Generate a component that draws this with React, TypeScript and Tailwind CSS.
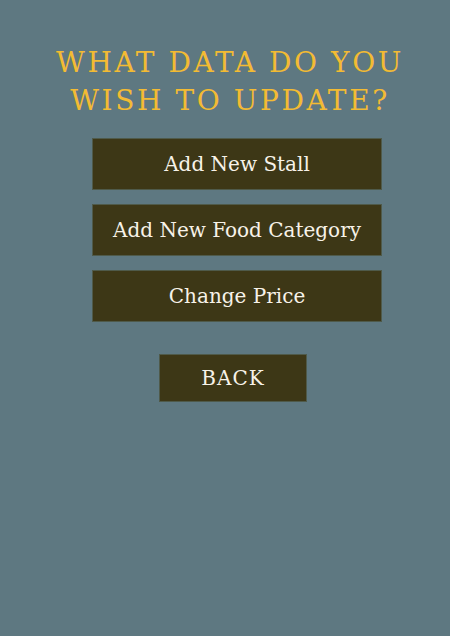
import React from "react";

export default function App() {
  const items = ["Add New Stall", "Add New Food Category", "Change Price"];
  return (
    <div
      className="w-[450px] h-[636px] bg-[#5e7881] flex flex-col items-start"
      style={{ fontFamily: '"DejaVu Serif", "Liberation Serif", serif' }}
    >
      <h1 className="mt-[44px] w-[460px] text-center text-[#f3bb33] text-[28px] leading-[38px] tracking-[2.6px] uppercase">
        What data do you
        <br />
        wish to update?
      </h1>
      <div className="ml-[92px] mt-[18px] flex flex-col gap-[14px]">
        {items.map((t) => (
          <button
            key={t}
            className="w-[290px] h-[52px] bg-[#3d3716] border border-[#4f5a4a] text-[#f7f2e8] text-[20px] flex items-center justify-center"
          >
            {t}
          </button>
        ))}
      </div>
      <button className="ml-[159px] mt-[32px] w-[148px] h-[48px] bg-[#3d3716] border border-[#4f5a4a] text-[#f7f2e8] text-[20px] tracking-[1px] flex items-center justify-center">
        BACK
      </button>
    </div>
  );
}
